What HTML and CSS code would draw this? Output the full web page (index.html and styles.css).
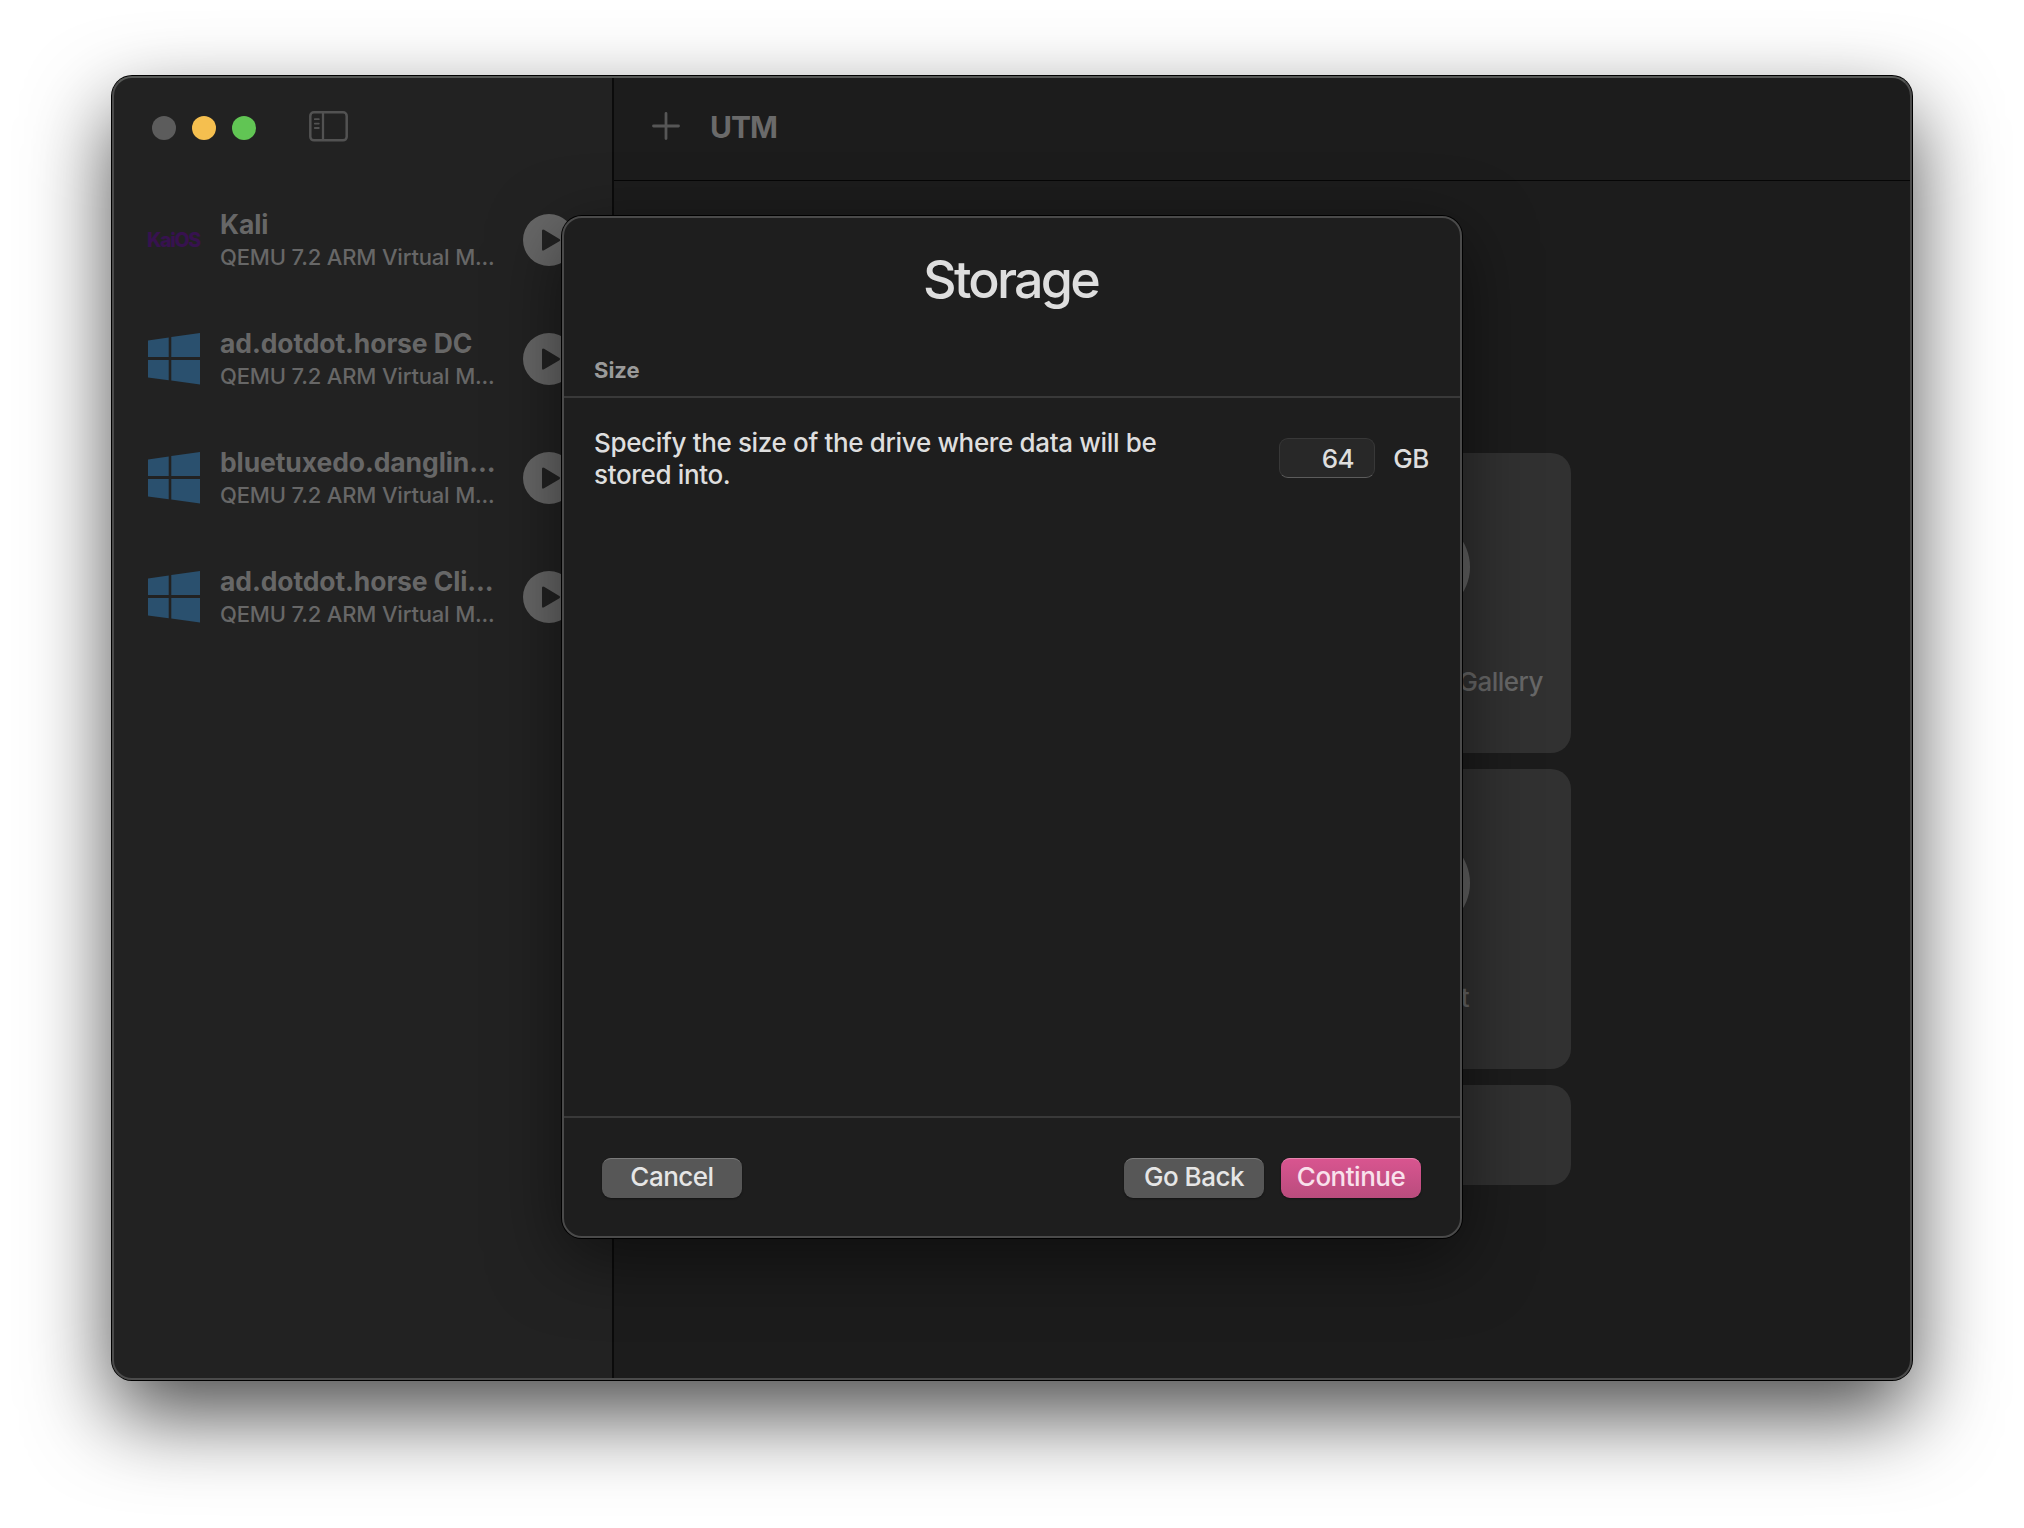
FILE: index.html
```html
<!DOCTYPE html>
<html lang="en">
<head>
<meta charset="utf-8">
<title>UTM</title>
<link rel="stylesheet" href="styles.css">
</head>
<body>
<svg class="defs" aria-hidden="true">
  <symbol id="windows" viewBox="0 0 52 52">
    <path d="M0 7.4 20.7 4.5V24H0zM23.3 4.1 52 0V24H23.3zM0 27H20.7V47.2L0 44.4zM23.3 27H52V51.5L23.3 47.6z"/>
  </symbol>
  <symbol id="play" viewBox="0 0 52 52">
    <path fill-rule="evenodd" d="M26 0a26 26 0 1 1 0 52a26 26 0 0 1 0-52zM19 17V35.2Q19 37.4 21 36.3L36.4 27.3Q38 26.1 36.4 25L21 15.8Q19 14.8 19 17z"/>
  </symbol>
</svg>
<div class="window">
  <aside class="sidebar">
    <div class="titlebar">
      <span class="light close"></span>
      <span class="light minimize"></span>
      <span class="light zoom"></span>
      <svg class="toggle" viewBox="0 0 39 31" fill="none" stroke="currentColor">
        <rect x="1.3" y="1.3" width="36.4" height="28" rx="3.6" stroke-width="2.5"/>
        <path d="M14 1v29" stroke-width="2.3"/>
        <path d="M5.8 8.2h4M5.8 12.6h4M5.8 17h4" stroke-width="1.8" stroke-linecap="round"/>
      </svg>
    </div>
    <ul class="machines">
      <li class="machine">
        <span class="icon kaios">KaiOS</span>
        <div class="info"><div class="name">Kali</div><div class="detail">QEMU 7.2 ARM Virtual M...</div></div>
        <svg class="play"><use href="#play"/></svg>
      </li>
      <li class="machine">
        <svg class="icon"><use href="#windows"/></svg>
        <div class="info"><div class="name">ad.dotdot.horse DC</div><div class="detail">QEMU 7.2 ARM Virtual M...</div></div>
        <svg class="play"><use href="#play"/></svg>
      </li>
      <li class="machine">
        <svg class="icon"><use href="#windows"/></svg>
        <div class="info"><div class="name">bluetuxedo.danglin...</div><div class="detail">QEMU 7.2 ARM Virtual M...</div></div>
        <svg class="play"><use href="#play"/></svg>
      </li>
      <li class="machine">
        <svg class="icon"><use href="#windows"/></svg>
        <div class="info"><div class="name">ad.dotdot.horse Cli...</div><div class="detail">QEMU 7.2 ARM Virtual M...</div></div>
        <svg class="play"><use href="#play"/></svg>
      </li>
    </ul>
  </aside>
  <main class="main">
    <header class="toolbar">
      <svg class="plus" viewBox="0 0 28 28"><path d="M14 1.5v25M1.5 14h25" stroke="currentColor" stroke-width="2.8" stroke-linecap="round"/></svg>
      <h1 class="app-title">UTM</h1>
    </header>
    <div class="welcome">
      <div class="card gallery"><span class="disc"></span><span class="label">Gallery</span></div>
      <div class="card support"><span class="disc"></span><span class="label">t</span></div>
      <div class="card wide"></div>
    </div>
  </main>
  <section class="sheet">
    <h2 class="sheet-title">Storage</h2>
    <div class="section-head">Size</div>
    <div class="form-row">
      <p class="prompt">Specify the size of the drive where data will be stored into.</p>
      <div class="size"><span class="field">64</span><span class="unit">GB</span></div>
    </div>
    <footer class="actions">
      <button class="button cancel">Cancel</button>
      <button class="button back">Go Back</button>
      <button class="button primary">Continue</button>
    </footer>
  </section>
</div>
</body>
</html>
```
FILE: styles.css
```css
* { box-sizing: border-box; }
body {
  margin: 0;
  width: 2024px;
  height: 1528px;
  padding: 76px 112px;
  background: #fff;
  overflow: hidden;
  font-family: Inter, "Liberation Sans", sans-serif;
}
.defs { display: none; }
.window {
  position: relative;
  display: flex;
  width: 1800px;
  height: 1304px;
  border-radius: 20px;
  background: #1c1c1c;
  box-shadow: 0 0 0 1px #000, 0 35px 84px rgba(0, 0, 0, .7);
}
.window::after {
  content: "";
  position: absolute;
  inset: 0;
  border: 2px solid #4b4b4b;
  border-top-color: #565856;
  border-radius: 20px;
}
.sidebar {
  width: 502px;
  border-right: 2px solid #0b0b0b;
  border-radius: 20px 0 0 20px;
  background: #222;
  color: #676767;
}
.titlebar {
  display: flex;
  align-items: center;
  gap: 16px;
  height: 104px;
  padding-left: 40px;
}
.light { width: 24px; height: 24px; border-radius: 50%; }
.close { background: #5c5c5c; }
.minimize { background: #f5bf4f; }
.zoom { background: #61c554; }
.toggle { width: 39px; height: 31px; margin: -4px 0 0 37px; color: #525252; }
.machines {
  display: flex;
  flex-direction: column;
  gap: 67px;
  margin: 34px 0 0;
  padding: 0 0 0 36px;
  list-style: none;
}
.machine { display: flex; align-items: center; height: 52px; }
.icon { flex: none; width: 52px; height: 52px; margin-right: 20px; fill: #2a506e; }
.kaios {
  color: #37124f;
  font-size: 19.5px;
  font-weight: 800;
  line-height: 52px;
  letter-spacing: -1.3px;
  text-indent: -1px;
}
.info { width: 303px; white-space: nowrap; }
.name { font-size: 26.5px; font-weight: 700; line-height: 32px; letter-spacing: -.1px; }
.detail { margin-bottom: -2px; font-size: 22px; line-height: 34px; font-weight: 450; letter-spacing: -.17px; }
.play { flex: none; width: 52px; height: 52px; fill: #676767; }
.main { flex: 1; }
.toolbar {
  display: flex;
  align-items: center;
  height: 105px;
  padding-left: 38px;
  border-bottom: 1px solid #060606;
  color: #6a6a6a;
}
.plus { width: 28px; height: 28px; margin-top: -5px; color: #565656; }
.app-title { margin: -2px 0 0 30px; font-size: 30px; font-weight: 650; letter-spacing: -1px; }
.welcome {
  display: grid;
  grid-template-columns: 300px 300px;
  grid-template-rows: 300px 300px 100px;
  gap: 16px;
  margin: 272px 0 0 341px;
}
.card {
  display: flex;
  flex-direction: column;
  grid-column: 2;
  border-radius: 20px;
  background: #313131;
  color: #676767;
}
.wide { grid-column: 1 / -1; }
.disc { width: 98px; height: 98px; margin: 65px 0 0 101px; border-radius: 50%; background: #626262; }
.label {
  margin: 50px 28px 0 0;
  font-size: 26px;
  font-weight: 450;
  line-height: 32px;
  letter-spacing: -.5px;
  text-align: right;
}
.support .label { margin-right: 102px; }
.sheet {
  position: absolute;
  left: 450px;
  top: 140px;
  z-index: 1;
  display: flex;
  flex-direction: column;
  width: 900px;
  height: 1022px;
  border: 2px solid #4a4a4a;
  border-radius: 20px;
  background: #1e1e1e;
  color: #dedede;
  box-shadow: 0 0 0 1px #000, 0 20px 70px rgba(0, 0, 0, .5);
}
.sheet-title {
  margin: 30px 3px 0 0;
  font-size: 52px;
  font-weight: 450;
  line-height: 64px;
  text-align: center;
  letter-spacing: -2.8px;
}
.section-head {
  height: 86px;
  padding: 43px 30px 0;
  border-bottom: 2px solid #393939;
  color: #9a9a9a;
  font-size: 22px;
  font-weight: 650;
  line-height: 30px;
}
.form-row { display: flex; align-items: flex-start; justify-content: space-between; flex: 1; padding: 29px 31px 0 30px; }
.prompt { width: 600px; margin: 0; font-size: 26px; font-weight: 450; line-height: 32px; letter-spacing: -.35px; }
.size { display: flex; align-items: center; gap: 18px; margin-top: 11px; font-size: 26px; font-weight: 450; letter-spacing: -.4px; }
.field {
  width: 96px;
  height: 40px;
  padding-right: 20px;
  border: 1px solid #383838;
  border-bottom-color: #5c5c5c;
  border-radius: 9px;
  background: #282828;
  line-height: 39px;
  text-align: right;
}
.actions { display: flex; height: 120px; padding: 40px 39px 0 38px; border-top: 2px solid #393939; }
.button {
  width: 140px;
  height: 40px;
  padding: 0 0 3px;
  border: 0;
  border-radius: 9px;
  background: #575757;
  box-shadow: inset 0 2px 0 -1px #7a7a7a, 0 1px 2px rgba(0, 0, 0, .4);
  color: #e6e6e6;
  font: 450 26px/37px Inter, "Liberation Sans", sans-serif;
  letter-spacing: -.5px;
  white-space: nowrap;
}
.back { margin-left: auto; }
.primary {
  margin-left: 17px;
  background: linear-gradient(#d95590, #b94c7d);
  box-shadow: inset 0 2px 0 -1px #e585ae, 0 1px 2px rgba(0, 0, 0, .4);
  color: #f9e1ec;
}
```
